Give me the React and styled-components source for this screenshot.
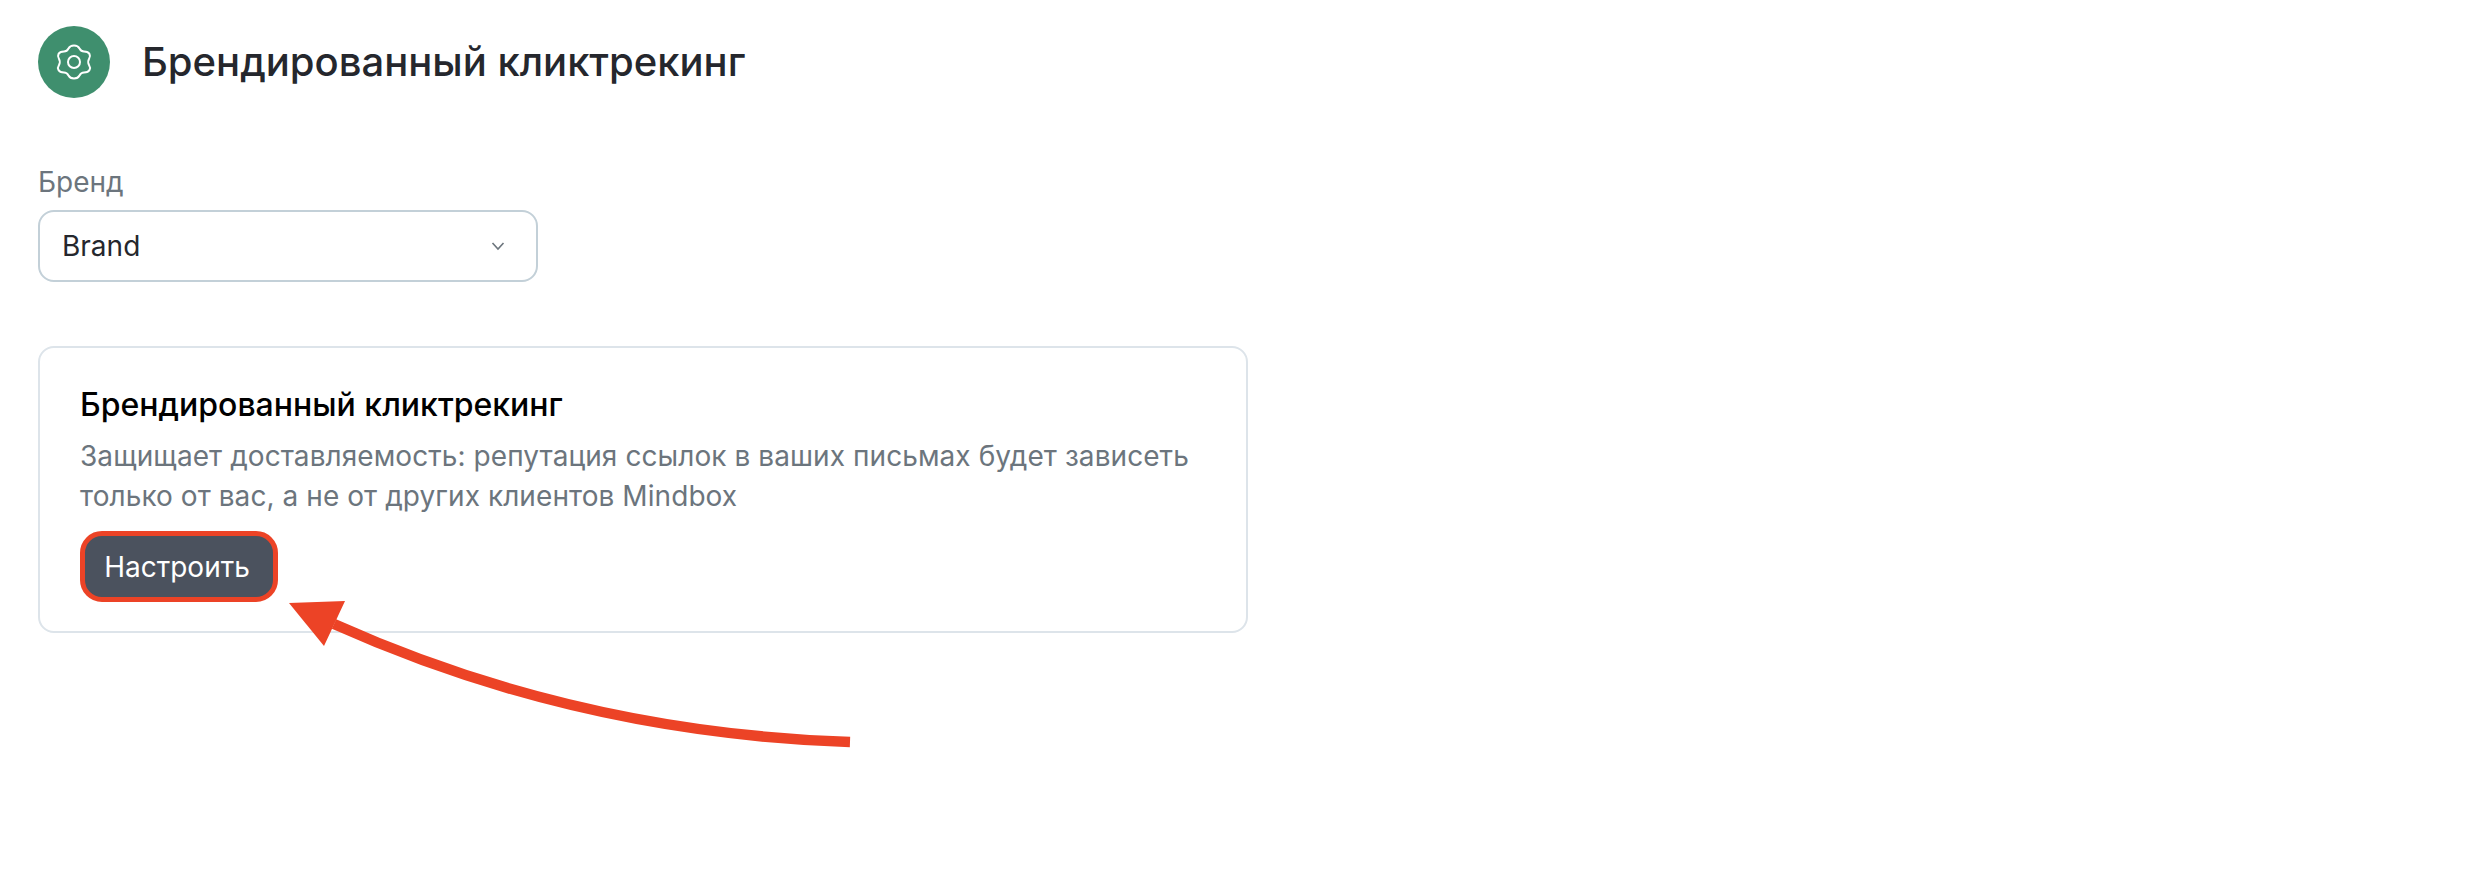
import styled, { createGlobalStyle } from 'styled-components';

const GlobalStyle = createGlobalStyle`
  html, body {
    margin: 0;
    background: #fff;
    font-family: Inter, 'Liberation Sans', sans-serif;
  }
`;

function GearIcon() {
  return (
    <svg width="36" height="36" viewBox="0 0 36 36" fill="none" stroke="#fff" strokeWidth="2" strokeLinejoin="round">
      <path d="M18 1.5 C20.5 1.5 22.5 2.5 23.5 4.5 C24.5 6.5 26 7.5 28 7.5 C30.5 7.5 32.5 8 33.5 10 C34.5 12 34 13.5 33 15 C32 16.5 32 19.5 33 21 C34 22.5 34.5 24 33.5 26 C32.5 28 30.5 28.5 28 28.5 C26 28.5 24.5 29.5 23.5 31.5 C22.5 33.5 20.5 34.5 18 34.5 C15.5 34.5 13.5 33.5 12.5 31.5 C11.5 29.5 10 28.5 8 28.5 C5.5 28.5 3.5 28 2.5 26 C1.5 24 2 22.5 3 21 C4 19.5 4 16.5 3 15 C2 13.5 1.5 12 2.5 10 C3.5 8 5.5 7.5 8 7.5 C10 7.5 11.5 6.5 12.5 4.5 C13.5 2.5 15.5 1.5 18 1.5 Z" />
      <circle cx="18" cy="18" r="6" />
    </svg>
  );
}

function ChevronIcon() {
  return (
    <svg width="16" height="16" viewBox="0 0 16 16" fill="none" stroke="#6c757d" strokeWidth="1.6">
      <path d="M2.5 5 L8 11 L13.5 5" />
    </svg>
  );
}

export default function App() {
  return (
    <Page>
      <GlobalStyle />
      <Header>
        <IconCircle><GearIcon /></IconCircle>
        <PageTitle>Брендированный кликтрекинг</PageTitle>
      </Header>

      <Field>
        <FieldLabel>Бренд</FieldLabel>
        <Select>
          <span>Brand</span>
          <ChevronIcon />
        </Select>
      </Field>

      <Card>
        <CardTitle>Брендированный кликтрекинг</CardTitle>
        <CardText>
          Защищает доставляемость: репутация ссылок в ваших письмах будет зависеть
          только от вас, а не от других клиентов Mindbox
        </CardText>
        <SetupButton>Настроить</SetupButton>
      </Card>

      <Arrow width="2478" height="874" viewBox="0 0 2478 874">
        <path d="M334 624 Q577 733 850 742" fill="none" stroke="#ec4326" strokeWidth="10.5" />
        <polygon points="289,603 345,601 324,646" fill="#ec4326" />
      </Arrow>
    </Page>
  );
}

const Page = styled.div`
  position: relative;
  width: 2478px;
  height: 874px;
  box-sizing: border-box;
  padding: 26px 38px;
  overflow: hidden;
`;

const Header = styled.header`
  display: flex;
  align-items: center;
  gap: 32px;
  height: 72px;
`;

const IconCircle = styled.div`
  width: 72px;
  height: 72px;
  border-radius: 50%;
  background: #3f8f6e;
  display: flex;
  align-items: center;
  justify-content: center;
`;

const PageTitle = styled.h1`
  margin: 0 0 2px;
  font-size: 40px;
  font-weight: 500;
  color: #25272d;
`;

const Field = styled.div`
  margin-top: 64px;
  width: 500px;
`;

const FieldLabel = styled.div`
  font-size: 28px;
  line-height: 40px;
  color: #6c757d;
  margin-bottom: 8px;
`;

const Select = styled.div`
  height: 72px;
  box-sizing: border-box;
  border: 2px solid #c3d0d8;
  border-radius: 16px;
  padding: 0 30px 0 22px;
  display: flex;
  align-items: center;
  justify-content: space-between;
  font-size: 28px;
  color: #25272d;
`;

const Card = styled.section`
  margin-top: 64px;
  width: 1210px;
  height: 287px;
  box-sizing: border-box;
  border: 2px solid #dde4ea;
  border-radius: 16px;
  padding: 35px 40px;
`;

const CardTitle = styled.h2`
  margin: 0;
  font-size: 32px;
  line-height: 44px;
  font-weight: 500;
  color: #000;
`;

const CardText = styled.p`
  margin: 9px 0 0;
  font-size: 28px;
  line-height: 40px;
  letter-spacing: 0.07px;
  color: #6c757d;
`;

const SetupButton = styled.button`
  display: block;
  margin-top: 15px;
  width: 198px;
  height: 71px;
  box-sizing: border-box;
  border: 5px solid #ec4326;
  border-radius: 22px;
  background: #4b525e;
  color: #fff;
  font-family: inherit;
  font-size: 28px;
  padding: 0 4px 0 0;
`;

const Arrow = styled.svg`
  position: absolute;
  left: 0;
  top: 0;
  pointer-events: none;
`;
